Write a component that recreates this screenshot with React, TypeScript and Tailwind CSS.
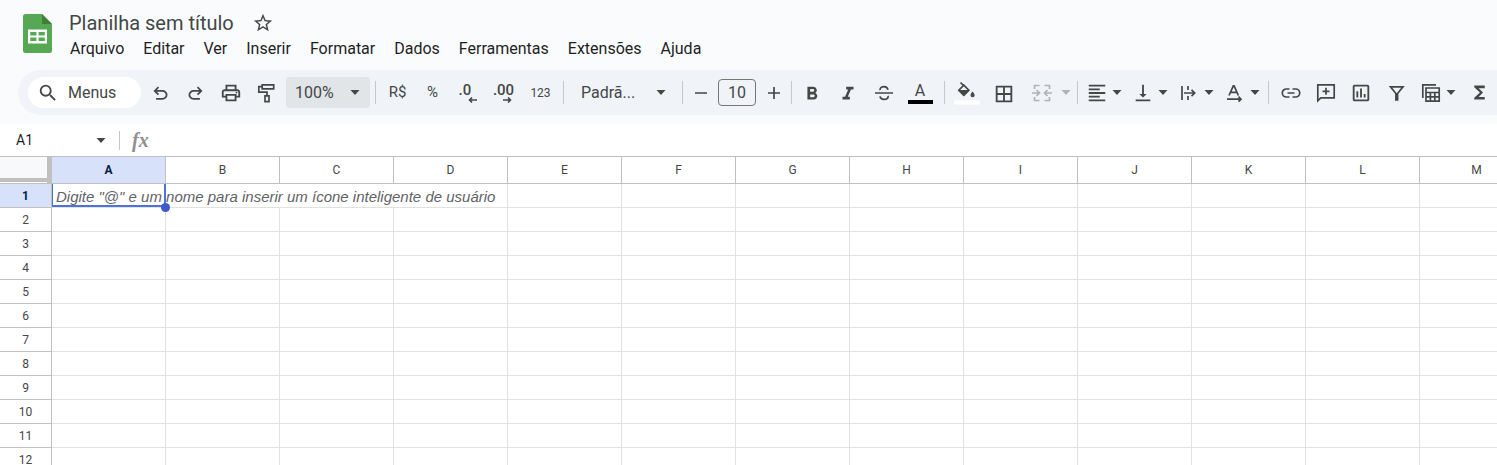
import type { ReactNode } from 'react';
import {
  MdBorderAll,
  MdFormatAlignLeft,
  MdFormatBold,
  MdFormatItalic,
  MdFunctions,
  MdOutlineInsertChart,
  MdOutlinePrint,
  MdSearch,
  MdStarBorder,
  MdVerticalAlignBottom,
} from 'react-icons/md';

const menus = ['Arquivo', 'Editar', 'Ver', 'Inserir', 'Formatar', 'Dados', 'Ferramentas', 'Extensões', 'Ajuda'];
const columns = ['A', 'B', 'C', 'D', 'E', 'F', 'G', 'H', 'I', 'J', 'K', 'L', 'M'];
const rows = [1, 2, 3, 4, 5, 6, 7, 8, 9, 10, 11, 12];

function Arrow({ className = '' }: { className?: string }) {
  return (
    <svg viewBox="0 0 10 5" className={`h-[5px] w-[10px] shrink-0 ${className}`} fill="currentColor" aria-hidden="true">
      <path d="M0.500 0h9L5 5z" />
    </svg>
  );
}

function Divider() {
  return <div className="mx-1 h-[23px] w-px shrink-0 bg-[#c7c7c7]" />;
}

function Tool({ label, width = 'w-9', children }: { label: string; width?: string; children: ReactNode }) {
  return (
    <button type="button" aria-label={label} className={`flex h-8 shrink-0 items-center justify-center ${width}`}>
      {children}
    </button>
  );
}

function SplitTool({ label, children }: { label: string; children: ReactNode }) {
  return (
    <button type="button" aria-label={label} className="flex h-8 w-[46px] shrink-0 items-center">
      <span className="flex w-[30px] shrink-0 justify-center">{children}</span>
      <Arrow />
    </button>
  );
}

function Drawing({ children, className = 'size-5' }: { children: ReactNode; className?: string }) {
  return (
    <svg viewBox="0 0 20 20" className={className} fill="none" stroke="currentColor" strokeWidth="1.7" aria-hidden="true">
      {children}
    </svg>
  );
}

function Logo() {
  return (
    <svg viewBox="0 0 29 39" className="h-[39px] w-[29px] shrink-0" aria-hidden="true">
      <path d="M2.500 0H19l10 10v26.500a2.500 2.500 0 0 1-2.500 2.500h-24A2.500 2.500 0 0 1 0 36.500v-34A2.500 2.500 0 0 1 2.500 0z" fill="#57a854" />
      <path d="M19 0l10 10H19z" fill="#3d8036" />
      <path fillRule="evenodd" d="M5 15.500h19v14H5zM7.200 18v3.500h6.200V18zM15.600 18v3.500h6.200V18zM7.200 23.500V27h6.200v-3.500zM15.600 23.500V27h6.200v-3.500z" fill="#fff" />
    </svg>
  );
}

function Toolbar() {
  return (
    <div role="toolbar" aria-label="Principal" className="ml-[18px] flex h-[45px] items-center overflow-hidden rounded-l-full bg-[#f0f4f9] pl-[10px] text-[#444746]">
      <label className="mr-0.5 flex h-[31px] w-[113px] shrink-0 items-center rounded-full bg-white pl-[9px]">
        <MdSearch className="size-[22px] shrink-0" />
        <input aria-label="Pesquisar nos menus" placeholder="Menus" className="ml-[9px] w-16 bg-transparent text-base outline-none placeholder:text-[#444746]" />
      </label>
      <Tool label="Desfazer" width="w-[35px]">
        <svg viewBox="0 -960 960 960" className="mt-0.5 size-[21px]" fill="currentColor">
          <path d="M280-200v-80h284q63 0 109.500-40T720-420q0-60-46.500-100T564-560H312l104 104-56 56-200-200 200-200 56 56-104 104h252q97 0 166.500 63T800-420q0 94-69.500 157T564-200H280Z" />
        </svg>
      </Tool>
      <Tool label="Refazer" width="w-[35px]">
        <svg viewBox="0 -960 960 960" className="mt-0.5 size-[21px]" fill="currentColor">
          <path d="M396-200q-97 0-166.500-63T160-420q0-94 69.500-157T396-640h252L544-744l56-56 200 200-200 200-56-56 104-104H396q-63 0-109.500 40T240-420q0 60 46.500 100T396-280h284v80H396Z" />
        </svg>
      </Tool>
      <Tool label="Imprimir" width="w-[35px]">
        <MdOutlinePrint className="size-[22px]" />
      </Tool>
      <Tool label="Pintar formatação" width="w-[35px]">
        <Drawing>
          <path d="M6.200 1.800h11.500v4H6.200zM6.200 3.600H2.800v5.600h8.200v3.500M9 12.800h4v5.800H9z" />
        </Drawing>
      </Tool>
      <div className="relative ml-[3px] mr-px h-[31px] w-[84px] shrink-0">
        <select aria-label="Zoom" className="size-full appearance-none rounded bg-[#e1e5e7] pl-[9px] text-base outline-none">
          <option>100%</option>
        </select>
        <Arrow className="pointer-events-none absolute right-[10px] top-[13px]" />
      </div>
      <Divider />
      <Tool label="Formatar como moeda" width="w-[35px]"><span className="text-[15px]">R$</span></Tool>
      <Tool label="Formatar como porcentagem" width="w-[35px]"><span className="text-[15px]">%</span></Tool>
      <Tool label="Diminuir casas decimais" width="w-[35px]">
        <span className="flex flex-col items-start text-[15px] leading-[14px] font-medium">
          .0
          <svg viewBox="0 0 9 6" className="ml-[9px] h-[6px] w-[9px]" fill="none" stroke="currentColor" strokeWidth="1.600"><path d="M9 3H1.500M4 .5L1.500 3 4 5.500" /></svg>
        </span>
      </Tool>
      <Tool label="Aumentar casas decimais" width="w-[37px]">
        <span className="flex flex-col items-start text-[15px] leading-[14px] font-medium">
          .00
          <svg viewBox="0 0 9 6" className="ml-[10px] h-[6px] w-[9px]" fill="none" stroke="currentColor" strokeWidth="1.600"><path d="M0 3h7.500M5 .5L7.500 3 5 5.500" /></svg>
        </span>
      </Tool>
      <Tool label="Mais formatos" width="w-[37px]"><span className="text-xs">123</span></Tool>
      <Divider />
      <div className="relative h-8 w-[110px] shrink-0">
        <select aria-label="Fonte" className="size-full appearance-none bg-transparent pl-[13px] text-base outline-none">
          <option>Padrã...</option>
        </select>
        <Arrow className="pointer-events-none absolute right-[12px] top-[13px]" />
      </div>
      <Divider />
      <Tool label="Diminuir tamanho da fonte" width="w-[27px]">
        <Drawing><path d="M4 10h12" /></Drawing>
      </Tool>
      <input aria-label="Tamanho da fonte" defaultValue="10" className="mx-1 h-[27px] w-[38px] shrink-0 rounded border border-[#747775] bg-transparent text-center text-base outline-none" />
      <Tool label="Aumentar tamanho da fonte" width="w-[27px]">
        <Drawing><path d="M4 10h12M10 4v12" /></Drawing>
      </Tool>
      <Divider />
      <div className="-ml-0.5 mr-0.5 flex shrink-0">
        <Tool label="Negrito"><MdFormatBold className="mt-0.5 size-[22px]" /></Tool>
        <Tool label="Itálico"><MdFormatItalic className="mt-0.5 size-[22px]" /></Tool>
        <Tool label="Tachado">
          <Drawing>
            <path d="M1 10h18M14 6.800C13.500 4.500 12 3.600 10 3.600c-2.300 0-3.900 1.100-3.900 2.900 0 .2 0 .4.1.6M6 13.300c.4 2.100 2 3.100 4.100 3.100 2.400 0 4-1.100 4-2.900 0-.2 0-.4-.1-.6" />
          </Drawing>
        </Tool>
        <Tool label="Cor do texto">
          <span className="flex flex-col items-center text-base leading-[18px]">
            A
            <span className="h-1 w-[25px] bg-black" />
          </span>
        </Tool>
      </div>
      <Divider />
      <Tool label="Cor de preenchimento">
        <svg viewBox="0 0 26 24" className="h-6 w-[26px]" aria-hidden="true">
          <path d="M6.500 1.500l2.800 2.800M9.800 4.200l5 5-5 5-5-5z" fill="none" stroke="#444746" strokeWidth="1.700" />
          <path d="M4 9h11.600l-5.800 6zM18.500 10.500s2.200 2.400 2.200 3.700a2.100 2.100 0 0 1-4.200 0c0-1.300 2-3.700 2-3.700z" fill="#444746" />
          <path d="M0 19.500h26v4H0z" fill="#fff" />
        </svg>
      </Tool>
      <Tool label="Bordas" width="w-[38px]"><MdBorderAll className="mt-0.5 size-[22px]" /></Tool>
      <button type="button" disabled aria-label="Mesclar células" className="flex h-8 w-[50px] shrink-0 items-center text-[#b0b3b5]">
        <span className="flex w-[38px] justify-center">
          <Drawing>
            <path d="M7.500 2.500h-5V6M2.500 14v3.500h5M12.500 2.500h5V6M17.500 14v3.500h-5M0 10h7M4.500 7L7.500 10l-3 3M20 10h-7M15.500 7l-3 3 3 3" />
          </Drawing>
        </span>
        <Arrow />
      </button>
      <Divider />
      <div className="-mr-0.5 flex shrink-0">
        <SplitTool label="Alinhamento horizontal"><MdFormatAlignLeft className="size-[22px]" /></SplitTool>
        <SplitTool label="Alinhamento vertical">
          <MdVerticalAlignBottom className="size-[22px]" />
        </SplitTool>
        <SplitTool label="Ajuste de texto">
          <Drawing><path d="M3 3v14M9 3v4M9 13v4M5 10h10.500M12.500 6.800l3.200 3.200-3.200 3.200" /></Drawing>
        </SplitTool>
        <SplitTool label="Rotação do texto">
          <Drawing><path d="M4 12.500L8.300 2.800h.8l4.300 9.700M5.500 9.300h6.400M2 16.200h14M13.500 13.700l2.500 2.500-2.500 2.500" /></Drawing>
        </SplitTool>
      </div>
      <Divider />
      <Tool label="Inserir link" width="w-[35px]">
        <Drawing><path d="M8.500 6H5.300a4 4 0 0 0 0 8h3.200M11.500 6h3.200a4 4 0 0 1 0 8h-3.200M6.500 10h7" /></Drawing>
      </Tool>
      <Tool label="Inserir comentário" width="w-[35px]">
        <Drawing><path d="M1.800 17.800V1.800h16.400v13H4.800zM10 4.800v7M6.500 8.300h7" /></Drawing>
      </Tool>
      <Tool label="Inserir gráfico" width="w-[35px]"><MdOutlineInsertChart className="size-[22px]" /></Tool>
      <Tool label="Criar um filtro" width="w-[35px]">
        <Drawing><path d="M4.500 3.800h12.500L11.600 10.500V17H9.900v-6.500z" /></Drawing>
      </Tool>
      <div className="ml-[3px] flex shrink-0">
        <SplitTool label="Visualizações de filtro">
          <Drawing><path d="M1.800 15V1.800H15M5 5h13.200v13.200H5zM5 9.500h13.200M5 13.800h13.200M9.400 9.500v8.700M13.800 9.500v8.700" /></Drawing>
        </SplitTool>
      </div>
      <Tool label="Funções" width="w-[35px]"><MdFunctions className="size-[21px]" /></Tool>
    </div>
  );
}

function Sheet() {
  return (
    <div className="min-h-0 flex-1 overflow-hidden">
      <table className="w-[1534px] table-fixed border-separate border-spacing-0 text-center font-['Roboto',sans-serif] text-xs text-[#444746]">
        <thead>
          <tr className="h-7">
            <th aria-label="Selecionar tudo" className="w-[52px] border-y border-[#c0c0c0] p-0">
              <div className="h-[26px] border-r-[5px] border-[#c0c0c0] bg-white">
                <div className="h-[25px] border-b-4 border-[#c0c0c0] bg-[#f8f9fa]" />
              </div>
            </th>
            {columns.map((name) => (
              <th
                key={name}
                scope="col"
                className={`w-[114px] border-y border-r border-[#c0c0c0] p-0 ${name === 'A' ? 'bg-[#d7e2fa] font-bold text-[#041e49]' : 'font-normal'}`}
              >
                {name}
              </th>
            ))}
          </tr>
        </thead>
        <tbody>
          {rows.map((row) => (
            <tr key={row} className="h-6">
              <th
                scope="row"
                className={`border-r border-b border-[#c0c0c0] p-0 leading-[14px] ${row === 1 ? 'bg-[#d7e2fa] font-bold text-[#041e49]' : 'font-normal'}`}
              >
                {row}
              </th>
              {columns.map((name) =>
                row === 1 && name === 'A' ? (
                  <td key={name} className="relative border-b border-[#e1e1e1] p-0">
                    <div className="absolute inset-0 border-r-2 border-b-2 border-l border-[#4b73dc]" />
                    <div className="absolute -right-1 -bottom-[5px] z-10 size-[9px] rounded-full bg-[#3d5ac8]" />
                    <span className="absolute top-0.5 left-1 font-['Liberation_Sans',Arial,sans-serif] text-[15px] leading-[22px] whitespace-nowrap text-[#5f6368] italic">
                      Digite "@" e um nome para inserir um ícone inteligente de usuário
                    </span>
                  </td>
                ) : (
                  <td
                    key={name}
                    className={`border-b border-[#e1e1e1] p-0 ${row === 1 && (name === 'B' || name === 'C') ? '' : 'border-r'}`}
                  />
                ),
              )}
            </tr>
          ))}
        </tbody>
      </table>
    </div>
  );
}

export default function App() {
  return (
    <div className="flex h-screen flex-col overflow-hidden bg-white font-['Roboto',sans-serif]">
      <header className="h-[124px] shrink-0 bg-[#f9fbfd]">
        <div className="flex h-[70px] pt-[10px] pl-[23px]">
          <div className="pt-1"><Logo /></div>
          <div className="min-w-0 flex-1 pl-[17px]">
            <div className="flex h-[26px] items-center">
              <input aria-label="Renomear" defaultValue="Planilha sem título" className="w-[183px] bg-transparent text-xl text-[#444746] outline-none" />
              <button type="button" aria-label="Marcar com estrela" className="text-[#444746]">
                <MdStarBorder className="size-[22px]" />
              </button>
            </div>
            <nav aria-label="Menus" className="flex gap-[19px] pl-px text-base leading-[26px] text-[#1f1f1f]">
              {menus.map((menu) => (
                <button key={menu} type="button">{menu}</button>
              ))}
            </nav>
          </div>
        </div>
        <Toolbar />
      </header>
      <div className="flex h-8 shrink-0 items-center text-[#444746]">
        <label className="flex w-[119px] items-center pl-4">
          <input aria-label="Caixa de nome" defaultValue="A1" className="w-20 bg-transparent text-sm text-[#1f1f1f] outline-none" />
          <Arrow />
        </label>
        <div className="h-[19px] w-px bg-[#c7c7c7]" />
        <label htmlFor="formula" className="pl-3 font-['Liberation_Serif',serif] text-xl leading-6 font-bold text-[#8f8f8f] italic">fx</label>
        <input id="formula" className="ml-3 min-w-0 flex-1 bg-transparent text-sm outline-none" />
      </div>
      <Sheet />
    </div>
  );
}
